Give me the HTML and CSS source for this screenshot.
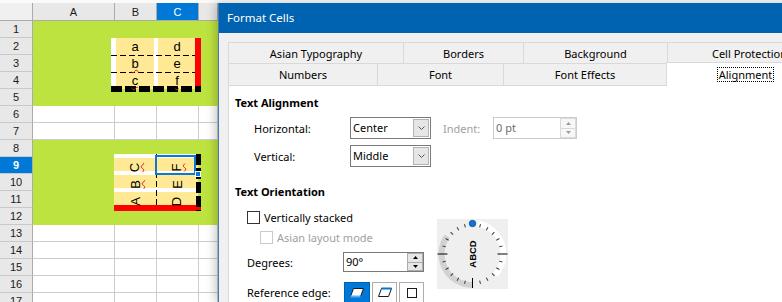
FILE: index.html
```html
<!DOCTYPE html>
<html lang="en">
<head>
    <meta charset="UTF-8">
    <title>Format Cells</title>
    <link rel="stylesheet" href="styles.css">
</head>
<body>
<div class="screen">
    <div class="sheet">
        <div class="heads">
            <div class="corner"></div>
            <div class="rh">1</div>
            <div class="rh">2</div>
            <div class="rh">3</div>
            <div class="rh">4</div>
            <div class="rh">5</div>
            <div class="rh">6</div>
            <div class="rh">7</div>
            <div class="rh">8</div>
            <div class="rh sel">9</div>
            <div class="rh">10</div>
            <div class="rh">11</div>
            <div class="rh">12</div>
            <div class="rh">13</div>
            <div class="rh">14</div>
            <div class="rh">15</div>
            <div class="rh">16</div>
            <div class="rh">17</div>
        </div>
        <div class="grid">
            <div class="colheads">
                <div class="ch col-a">A</div>
                <div class="ch col-b">B</div>
                <div class="ch col-c sel">C</div>
                <div class="ch col-d"></div>
            </div>

            <div class="band">
                <div class="blk-h">
                    <span>a</span><span>d</span>
                    <span class="typo">b</span><span>e</span>
                    <span class="typo">c</span><span class="typo">f</span>
                </div>
            </div>

            <div class="row"><div class="cell col-a"></div><div class="cell col-b"></div><div class="cell col-c"></div><div class="cell col-d"></div></div>
            <div class="row"><div class="cell col-a"></div><div class="cell col-b"></div><div class="cell col-c"></div><div class="cell col-d"></div></div>

            <div class="band">
                <div class="blk-v">
                    <div class="vc"><span class="typo">C</span></div>
                    <div class="vc cur"><span class="typo">F</span></div>
                    <div class="vc"><span class="typo">B</span></div>
                    <div class="vc"><span>E</span></div>
                    <div class="vc"><span>A</span></div>
                    <div class="vc"><span>D</span></div>
                </div>
            </div>

            <div class="row"><div class="cell col-a"></div><div class="cell col-b"></div><div class="cell col-c"></div><div class="cell col-d"></div></div>
            <div class="row"><div class="cell col-a"></div><div class="cell col-b"></div><div class="cell col-c"></div><div class="cell col-d"></div></div>
            <div class="row"><div class="cell col-a"></div><div class="cell col-b"></div><div class="cell col-c"></div><div class="cell col-d"></div></div>
            <div class="row"><div class="cell col-a"></div><div class="cell col-b"></div><div class="cell col-c"></div><div class="cell col-d"></div></div>
            <div class="row"><div class="cell col-a"></div><div class="cell col-b"></div><div class="cell col-c"></div><div class="cell col-d"></div></div>
        </div>
    </div>

    <div class="dialog">
        <div class="titlebar">Format Cells</div>
        <div class="dlg-body">
            <div class="tabrow">
                <div class="tab w-asian">Asian Typography</div>
                <div class="tab w-borders">Borders</div>
                <div class="tab w-bg">Background</div>
                <div class="tab w-protect">Cell Protection</div>
            </div>
            <div class="tabrow front">
                <div class="tab w-numbers">Numbers</div>
                <div class="tab w-font">Font</div>
                <div class="tab w-effects">Font Effects</div>
                <div class="tab w-align active"><span class="focus">Alignment</span></div>
            </div>

            <div class="panel">
                <div class="section-title">Text Alignment</div>
                <div class="align-grid">
                    <span class="lbl">Horizontal:</span>
                    <div class="combo">
                        <span class="value">Center</span>
                        <span class="drop"><svg width="7" height="4" viewBox="0 0 7 4"><polyline points="0.5,0.5 3.5,3.5 6.5,0.5" fill="none" stroke="#555"/></svg></span>
                    </div>
                    <span class="lbl off indent">Indent:</span>
                    <div class="spin off">
                        <span class="value">0 pt</span>
                        <span class="arrows">
                            <span class="arr"><svg width="5" height="3" viewBox="0 0 5 3"><polygon points="0,3 2.5,0 5,3"/></svg></span>
                            <span class="arr"><svg width="5" height="3" viewBox="0 0 5 3"><polygon points="0,0 5,0 2.5,3"/></svg></span>
                        </span>
                    </div>

                    <span class="lbl">Vertical:</span>
                    <div class="combo">
                        <span class="value">Middle</span>
                        <span class="drop"><svg width="7" height="4" viewBox="0 0 7 4"><polyline points="0.5,0.5 3.5,3.5 6.5,0.5" fill="none" stroke="#555"/></svg></span>
                    </div>
                </div>

                <div class="section-title second">Text Orientation</div>
                <div class="orient">
                    <div class="orient-left">
                        <div class="check"><span class="box"></span>Vertically stacked</div>
                        <div class="check sub off"><span class="box"></span>Asian layout mode</div>
                        <div class="field-row">
                            <span class="lbl">Degrees:</span>
                            <div class="spin">
                                <span class="value">90°</span>
                                <span class="arrows">
                                    <span class="arr"><svg width="5" height="3" viewBox="0 0 5 3"><polygon points="0,3 2.5,0 5,3"/></svg></span>
                                    <span class="arr"><svg width="5" height="3" viewBox="0 0 5 3"><polygon points="0,0 5,0 2.5,3"/></svg></span>
                                </span>
                            </div>
                        </div>
                        <div class="field-row edge">
                            <span class="lbl">Reference edge:</span>
                            <div class="edge-btns">
                                <span class="edge-btn on">
                                    <svg width="14" height="11" viewBox="0 0 14 11"><polygon points="3.5,1.5 13.5,1.5 10.5,9.5 0.5,9.5" fill="#fff" stroke="#1a1a1a"/><line x1="0.5" y1="9.5" x2="10.5" y2="9.5" stroke="#59adf5" stroke-width="2"/></svg>
                                </span>
                                <span class="edge-btn">
                                    <svg width="14" height="11" viewBox="0 0 14 11"><polygon points="3.5,1.5 13.5,1.5 10.5,9.5 0.5,9.5" fill="#fff" stroke="#1a1a1a"/><line x1="3.5" y1="1.5" x2="13.5" y2="1.5" stroke="#0078d7" stroke-width="2"/></svg>
                                </span>
                                <span class="edge-btn">
                                    <svg width="12" height="12" viewBox="0 0 12 12"><rect x="1.5" y="1.5" width="9" height="9" fill="none" stroke="#1a1a1a"/></svg>
                                </span>
                            </div>
                        </div>
                    </div>

                    <div class="dial">
                        <svg width="71" height="70" viewBox="0 0 71 70">
                            <defs>
                                <line id="tick" x1="35.5" y1="4" x2="35.5" y2="7.5" stroke="#3c3c3c" stroke-width="1"/>
                            </defs>
                            <rect width="71" height="70" fill="#efefef"/>
                            <path d="M10.1 17.2 A31 31 0 0 0 35.5 66" fill="none" stroke="#d2d2d2" stroke-width="6"/>
                            <path d="M40.9 4.5 A31 31 0 0 1 58.5 55.7" fill="none" stroke="#ffffff" stroke-width="6"/>
                            <use href="#tick" transform="rotate(15 35.5 35)"/>
                            <use href="#tick" transform="rotate(30 35.5 35)"/>
                            <use href="#tick" transform="rotate(45 35.5 35)"/>
                            <use href="#tick" transform="rotate(60 35.5 35)"/>
                            <use href="#tick" transform="rotate(75 35.5 35)"/>
                            <use href="#tick" transform="rotate(105 35.5 35)"/>
                            <use href="#tick" transform="rotate(120 35.5 35)"/>
                            <use href="#tick" transform="rotate(135 35.5 35)"/>
                            <use href="#tick" transform="rotate(150 35.5 35)"/>
                            <use href="#tick" transform="rotate(165 35.5 35)"/>
                            <use href="#tick" transform="rotate(195 35.5 35)"/>
                            <use href="#tick" transform="rotate(210 35.5 35)"/>
                            <use href="#tick" transform="rotate(225 35.5 35)"/>
                            <use href="#tick" transform="rotate(240 35.5 35)"/>
                            <use href="#tick" transform="rotate(255 35.5 35)"/>
                            <use href="#tick" transform="rotate(285 35.5 35)"/>
                            <use href="#tick" transform="rotate(300 35.5 35)"/>
                            <use href="#tick" transform="rotate(315 35.5 35)"/>
                            <use href="#tick" transform="rotate(330 35.5 35)"/>
                            <use href="#tick" transform="rotate(345 35.5 35)"/>
                            <line x1="0.5" y1="35" x2="10.5" y2="35" stroke="#000"/>
                            <line x1="60.5" y1="35" x2="70.5" y2="35" stroke="#000"/>
                            <line x1="35.5" y1="59" x2="35.5" y2="69" stroke="#000"/>
                            <circle cx="35.5" cy="4.5" r="3.2" fill="#0a74d8" stroke="#0b4a8c" stroke-width="0.8"/>
                            <text x="35.5" y="35" transform="rotate(-90 35.5 35)" text-anchor="middle" dominant-baseline="central" class="dial-text">ABCD</text>
                        </svg>
                    </div>
                </div>
            </div>
        </div>
    </div>
</div>
</body>
</html>
```

FILE: styles.css
```css
body {
    margin: 0;
    background: #fafafa;
    font-family: "Liberation Sans", Arial, sans-serif;
}

.screen {
    display: flex;
    width: 782px;
    height: 302px;
    overflow: hidden;
}

/* spreadsheet */

.sheet {
    flex: none;
    width: 218px;
    display: flex;
    margin-top: 3px;
    font-size: 11px;
    color: #1b1b1b;
    background: #fff;
}

.heads {
    flex: none;
    width: 33px;
}

.corner {
    height: 18px;
    box-sizing: border-box;
    background: #f0f0f0;
    border-right: 1px solid #ababab;
    border-bottom: 1px solid #ababab;
}

.rh {
    height: 17px;
    box-sizing: border-box;
    background: #e8e8e8;
    border-right: 1px solid #ababab;
    border-bottom: 1px solid #c9c9c9;
    text-align: center;
    line-height: 17px;
}

.rh.sel {
    background: #0078d7;
    color: #fff;
    font-weight: bold;
}

.grid {
    flex: 1;
    min-width: 0;
}

.colheads {
    display: flex;
    height: 18px;
}

.ch {
    box-sizing: border-box;
    background: #e8e8e8;
    border-right: 1px solid #ababab;
    border-bottom: 1px solid #ababab;
    text-align: center;
    line-height: 18px;
}

.ch.sel {
    background: #0078d7;
    color: #fff;
}

.col-a { width: 82px; flex: none; }
.col-b { width: 42px; flex: none; }
.col-c { width: 42px; flex: none; }
.col-d { flex: 1; }

.row {
    display: flex;
    height: 17px;
}

.cell {
    box-sizing: border-box;
    border-right: 1px solid #cdcdcd;
    border-bottom: 1px solid #cdcdcd;
}

.band {
    height: 85px;
    background: #bde340;
    overflow: hidden;
}

.typo {
    text-decoration: underline wavy #e51b1b;
    text-decoration-thickness: 1px;
}

.blk-h {
    width: 90px;
    height: 54px;
    margin: 17px 0 0 78px;
    padding-left: 3px;
    box-sizing: border-box;
    display: grid;
    grid-template-columns: 42px 42px;
    grid-auto-rows: 17px;
    font-size: 13px;
    line-height: 17px;
    text-align: center;
    color: #000;
    background:
        repeating-linear-gradient(90deg, #000 0 11px, transparent 11px 14px) left bottom / 100% 6px no-repeat,
        linear-gradient(#ff0000, #ff0000) right top / 6px 100% no-repeat,
        repeating-linear-gradient(90deg, #000 0 6px, transparent 6px 9px) 0 17px / 84px 1px no-repeat,
        repeating-linear-gradient(90deg, #000 0 6px, transparent 6px 9px) 0 34px / 84px 1px no-repeat,
        linear-gradient(#fff, #fff) 0 0 / 5px 48px no-repeat,
        linear-gradient(#fff, #fff) 43px 0 / 4px 48px no-repeat,
        linear-gradient(#ffe994, #ffe994) 0 0 / 84px 51px no-repeat;
}

.blk-v {
    width: 87px;
    height: 57px;
    margin: 14px 0 0 81px;
    display: grid;
    grid-template-columns: 42px 42px;
    grid-auto-rows: 17px;
    font-size: 13px;
    color: #000;
    background:
        repeating-linear-gradient(180deg, #000 0 11px, transparent 11px 14px) right top / 5px 100% no-repeat,
        linear-gradient(#ff0000, #ff0000) left bottom / 100% 6px no-repeat,
        repeating-linear-gradient(180deg, #000 0 6px, transparent 6px 9px) 42px 0 / 1px 51px no-repeat,
        repeating-linear-gradient(180deg, #fff 0 4px, transparent 4px 17px) 0 0 / 82px 51px no-repeat,
        linear-gradient(#ffe994, #ffe994) 0 0 / 84px 51px no-repeat;
}

.vc {
    display: flex;
    align-items: center;
    justify-content: center;
    padding-top: 9px;
    box-sizing: border-box;
    line-height: 13px;
}

.vc span {
    display: inline-block;
    transform: rotate(-90deg);
}

.vc.cur {
    position: relative;
}

.vc.cur::after {
    content: '';
    position: absolute;
    left: -1px;
    top: 1px;
    width: 41px;
    height: 20px;
    border: 2px solid #0a78d6;
    box-sizing: border-box;
}

.vc.cur::before {
    content: '';
    position: absolute;
    left: 39px;
    top: 17px;
    width: 6px;
    height: 6px;
    background: #0a78d6;
    border: 1px solid #fff;
    box-sizing: border-box;
    z-index: 1;
}

/* dialog */

.dialog {
    flex: none;
    width: 620px;
    margin-top: 3px;
    display: flex;
    flex-direction: column;
    background: #f0f0f0;
    border-left: 1px solid #4a7bb0;
    box-shadow: -3px 0 9px rgba(0, 0, 0, 0.22);
    position: relative;
    z-index: 1;
    font-family: "Noto Sans", "Open Sans", sans-serif;
    font-size: 11px;
    color: #000;
}

.titlebar {
    height: 30px;
    line-height: 30px;
    padding-left: 8px;
    background: #0063b1;
    color: #fff;
    font-size: 11.5px;
}

.dlg-body {
    flex: 1;
    display: flex;
    flex-direction: column;
    padding: 9px 0 0 9px;
}

.tabrow {
    display: flex;
    height: 21px;
}

.tabrow.front {
    height: 22px;
}

.tab {
    flex: none;
    box-sizing: border-box;
    height: 100%;
    margin-right: -1px;
    border: 1px solid #d9d9d9;
    border-bottom: none;
    background: #f0f0f0;
    display: flex;
    align-items: center;
    justify-content: center;
}

.w-asian { width: 176px; }
.w-borders { width: 121px; }
.w-bg { width: 145px; }
.w-protect { width: 165px; }
.w-numbers { width: 150px; }
.w-font { width: 127px; }
.w-effects { width: 164px; }
.w-align { width: 159px; }

.tab.active {
    background: #fff;
    height: 24px;
    margin-top: -1px;
    position: relative;
    z-index: 1;
}

.focus {
    border: 1px dotted #000;
    padding: 0 1px;
    line-height: 13px;
}

.panel {
    flex: 1;
    background: #fff;
    border: 1px solid #d9d9d9;
    padding: 9px 0 0 6px;
}

.section-title {
    font-weight: bold;
    line-height: 16px;
}

.section-title.second {
    margin-top: 17px;
}

.align-grid {
    display: grid;
    grid-template-columns: 96px 81px 62px 84px;
    grid-auto-rows: 22px;
    row-gap: 6px;
    margin-top: 6px;
    padding-left: 19px;
    align-items: center;
}

.lbl.off,
.check.off {
    color: #a0a0a0;
}

.indent {
    padding-left: 12px;
}

.combo,
.spin {
    box-sizing: border-box;
    height: 22px;
    display: flex;
    border: 1px solid #7a7a7a;
    background: #fff;
}

.value {
    flex: 1;
    padding-left: 2px;
    line-height: 20px;
}

.drop {
    width: 16px;
    margin: 1px;
    box-sizing: border-box;
    border: 1px solid #b4b4b4;
    background: #e6e6e6;
    display: flex;
    align-items: center;
    justify-content: center;
}

.spin {
    height: 20px;
}

.spin .value {
    line-height: 18px;
}

.arrows {
    width: 16px;
    display: flex;
    flex-direction: column;
}

.arr {
    flex: 1;
    box-sizing: border-box;
    border: 1px solid #adadad;
    background: #e6e6e6;
    display: flex;
    align-items: center;
    justify-content: center;
}

.arr + .arr {
    border-top: none;
}

.spin.off {
    height: 22px;
    border-color: #cccccc;
}

.spin.off .value {
    color: #6d6d6d;
    line-height: 20px;
}

.spin.off .arr {
    border-color: #dadada;
    background: #f7f7f7;
    fill: #9a9a9a;
}

.orient {
    display: flex;
    align-items: flex-start;
    margin-top: 7px;
    padding-left: 12px;
}

.orient-left {
    width: 177px;
    flex: none;
}

.check {
    display: flex;
    align-items: center;
    height: 20px;
}

.check .box {
    width: 13px;
    height: 13px;
    box-sizing: border-box;
    border: 1px solid #333;
    background: #fff;
    margin-right: 4px;
}

.check.sub {
    margin-left: 13px;
}

.check.off .box {
    border-color: #cacaca;
}

.field-row {
    display: grid;
    grid-template-columns: 96px 81px;
    align-items: center;
    height: 20px;
    margin-top: 5px;
}

.field-row.edge {
    height: 21px;
    margin-top: 10px;
}

.edge-btns {
    display: flex;
    gap: 2px;
    height: 21px;
    margin-left: 1px;
}

.edge-btn {
    width: 25px;
    box-sizing: border-box;
    border: 1px solid #adadad;
    background: #fdfdfd;
    display: flex;
    align-items: center;
    justify-content: center;
}

.edge-btn.on {
    width: 26px;
    background: #0078d7;
    border-color: #0062b0;
}

.dial {
    flex: none;
    margin: 12px 0 0 13px;
    height: 70px;
}

.dial svg {
    display: block;
}

.dial-text {
    font-family: "Liberation Sans", Arial, sans-serif;
    font-size: 9.5px;
    font-weight: bold;
    fill: #000;
}
```
